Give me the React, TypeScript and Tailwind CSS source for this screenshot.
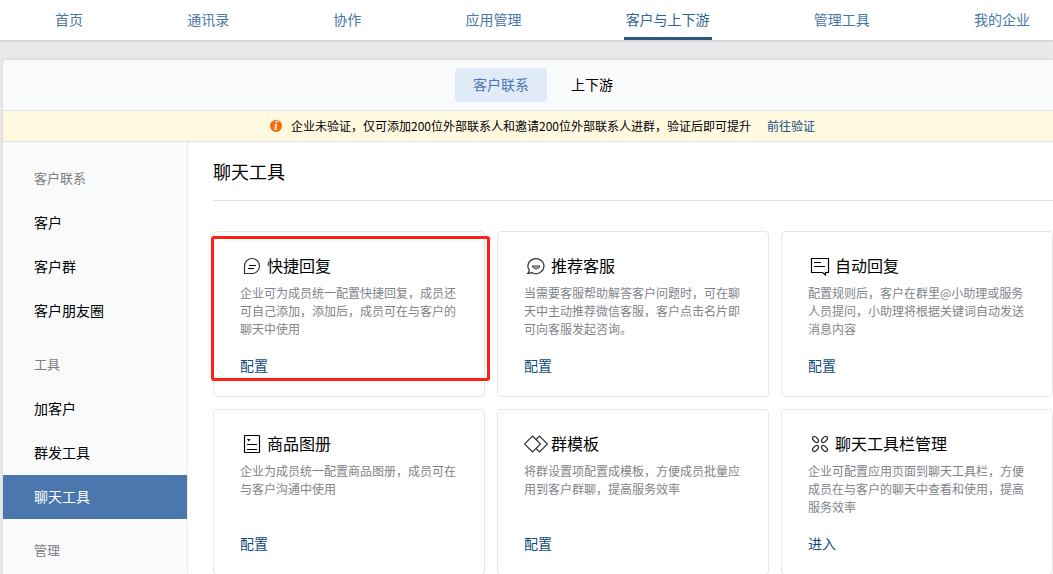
import type { ReactNode } from "react";

const navItems = ["首页", "通讯录", "协作", "应用管理", "客户与上下游", "管理工具", "我的企业"];
const activeNav = "客户与上下游";

const sections = [
  { title: "客户联系", items: ["客户", "客户群", "客户朋友圈"] },
  { title: "工具", items: ["加客户", "群发工具", "聊天工具"] },
  { title: "管理", items: [] as string[] },
];
const activeItem = "聊天工具";

function Icon({ children, muted = false }: { children: ReactNode; muted?: boolean }) {
  return (
    <svg
      viewBox="0 0 24 24"
      className={muted ? "size-6 shrink-0 text-[#333333]" : "size-6 shrink-0 text-black"}
      fill="none"
      stroke="currentColor"
      strokeWidth="1"
      aria-hidden="true"
    >
      {children}
    </svg>
  );
}

const quickReply = (
  <Icon muted>
    <path d="M4.5 19.5V12A7.5 7.5 0 1 1 12 19.5Z" strokeWidth="1.2" />
    <path d="M9 11.5H16M8 14.5H14" stroke="#000000" strokeWidth="1.1" />
  </Icon>
);

const service = (
  <Icon muted>
    <path
      d="M5.4 16.4A8 7.5 0 1 1 8.2 18.7C6.8 19 5.4 19.3 3.8 19.3C4.7 18.4 5.2 17.5 5.4 16.4Z"
      strokeWidth="1.2"
    />
    <path d="M8.2 12H16C15.4 13.9 14 14.8 12.1 14.8S8.8 13.9 8.2 12Z" fill="#b5b5b5" />
  </Icon>
);

const autoReply = (
  <Icon>
    <path d="M3.5 4.5H20.5V18.5H17.5V21L14.5 18.5H3.5Z" strokeWidth="1.2" />
    <path d="M6 8.5H13M6 12.5H17" />
  </Icon>
);

const album = (
  <Icon>
    <rect x="4.5" y="3.5" width="15" height="17" rx="0.5" strokeWidth="1.2" />
    <path d="M7 12.5H17M7 17.5H17" />
    <path d="M7 7H10.6L8.8 9.6Z" fill="currentColor" stroke="none" />
  </Icon>
);

const template = (
  <Icon muted>
    <path d="M8.5 4L16.5 12L8.5 20L0.5 12Z" strokeWidth="1.2" />
    <path d="M12 7.5L15.5 4L23.5 12L15.5 20L12 16.5" strokeWidth="1.2" />
  </Icon>
);

const toolbar = (
  <Icon muted>
    <g strokeWidth="1.2">
      <ellipse cx="7.5" cy="7.5" rx="3.6" ry="2.1" transform="rotate(45 7.5 7.5)" />
      <ellipse cx="16.5" cy="7.5" rx="3.6" ry="2.1" transform="rotate(-45 16.5 7.5)" />
      <ellipse cx="7.5" cy="16.5" rx="3.6" ry="2.1" transform="rotate(-45 7.5 16.5)" />
      <ellipse cx="16.5" cy="16.5" rx="3.6" ry="2.1" transform="rotate(45 16.5 16.5)" />
    </g>
  </Icon>
);

const cards = [
  {
    title: "快捷回复",
    icon: quickReply,
    text: "企业可为成员统一配置快捷回复，成员还可自己添加，添加后，成员可在与客户的聊天中使用",
    action: "配置",
    marked: true,
  },
  {
    title: "推荐客服",
    icon: service,
    text: "当需要客服帮助解答客户问题时，可在聊天中主动推荐微信客服，客户点击名片即可向客服发起咨询。",
    action: "配置",
  },
  {
    title: "自动回复",
    icon: autoReply,
    text: "配置规则后，客户在群里@小助理或服务人员提问，小助理将根据关键词自动发送消息内容",
    action: "配置",
  },
  {
    title: "商品图册",
    icon: album,
    text: "企业为成员统一配置商品图册，成员可在与客户沟通中使用",
    action: "配置",
  },
  {
    title: "群模板",
    icon: template,
    text: "将群设置项配置成模板，方便成员批量应用到客户群聊，提高服务效率",
    action: "配置",
  },
  {
    title: "聊天工具栏管理",
    icon: toolbar,
    text: "企业可配置应用页面到聊天工具栏，方便成员在与客户的聊天中查看和使用，提高服务效率",
    action: "进入",
  },
];

function TopNav() {
  return (
    <nav className="relative flex h-10 justify-between bg-white pr-[21px] pl-[53px] text-sm shadow-[0_1px_2px_rgba(0,0,0,0.15)]">
      {navItems.map((item) => (
        <a
          key={item}
          href="#"
          className={
            item === activeNav
              ? "border-b-3 border-[#2c5580] px-0.5 leading-[38px] whitespace-nowrap text-[#2f5f94]"
              : "px-0.5 leading-[38px] whitespace-nowrap text-[#4a76a8]"
          }
        >
          {item}
        </a>
      ))}
    </nav>
  );
}

function Sidebar() {
  return (
    <aside className="w-[185px] shrink-0 border-r border-dotted border-[#dcdfe4] bg-[#f9fafc] pt-[5px]">
      {sections.map((section) => (
        <section key={section.title}>
          <h2 className="pt-2.5 pb-0.5 pl-[31px] text-[13px] leading-[42px] text-[#7c7f83]">{section.title}</h2>
          <ul>
            {section.items.map((item) => (
              <li key={item}>
                <a
                  href="#"
                  className={
                    item === activeItem
                      ? "block bg-[#4a77ad] pb-0.5 pl-[31px] text-sm leading-[42px] text-white"
                      : "block pb-0.5 pl-[31px] text-sm leading-[42px] text-black"
                  }
                >
                  {item}
                </a>
              </li>
            ))}
          </ul>
        </section>
      ))}
    </aside>
  );
}

export default function App() {
  return (
    <div className="h-screen overflow-hidden bg-[#e8e9eb] font-['Noto_Sans_CJK_SC',sans-serif] text-black">
      <TopNav />
      <div className="mt-5 ml-[3px] flex min-h-screen flex-col overflow-hidden rounded-tl bg-white shadow-[0_0_3px_rgba(0,0,0,0.12)]">
        <div className="flex justify-center gap-1.5 border-b border-[#e2e4e9] bg-[#f9fafc] py-2 pl-[30px] text-sm">
          <button type="button" className="h-[34px] rounded bg-[#e0ebf7] px-[18px] pb-0.5 text-[#4a76b4]">
            客户联系
          </button>
          <button type="button" className="h-[34px] rounded px-[18px] pb-0.5">
            上下游
          </button>
        </div>
        <div className="flex h-[31px] items-center justify-center border-b border-[#e2e4e9] bg-[#fff9e0] pl-[29px] text-xs">
          <span className="flex size-3 items-center justify-center rounded-full bg-[#fa6b04] font-['Liberation_Serif',serif] text-xs leading-3 font-bold text-white italic">
            i
          </span>
          <p className="ml-[9px]">企业未验证，仅可添加200位外部联系人和邀请200位外部联系人进群，验证后即可提升</p>
          <a href="#" className="ml-4 text-[#0f4c81]">
            前往验证
          </a>
        </div>
        <div className="flex grow">
          <Sidebar />
          <main className="min-w-0 grow pl-[25px]">
            <h1 className="border-b border-[#dfe1e5] text-lg leading-[58px]">聊天工具</h1>
            <div className="mt-[30px] grid grid-cols-3 gap-3">
              {cards.map((card) => (
                <article key={card.title} className="relative rounded border border-[#e4e6e9] px-[26px] pt-[22px] pb-[21px]">
                  <div className="flex items-start gap-[3px]">
                    {card.icon}
                    <h3 className="text-base leading-[22px]">{card.title}</h3>
                  </div>
                  <p className="mt-1.5 min-h-[54px] text-xs leading-[18px] text-[#7f8389]">{card.text}</p>
                  <a href="#" className="mt-[17px] inline-block align-top text-sm leading-5 text-[#0f4c81]">
                    {card.action}
                  </a>
                  {card.marked && (
                    <div className="pointer-events-none absolute top-1 -right-1.5 bottom-[15px] -left-[3px] z-10 rounded-[3px] border-3 border-[#ff2116]" />
                  )}
                </article>
              ))}
            </div>
          </main>
        </div>
      </div>
    </div>
  );
}
